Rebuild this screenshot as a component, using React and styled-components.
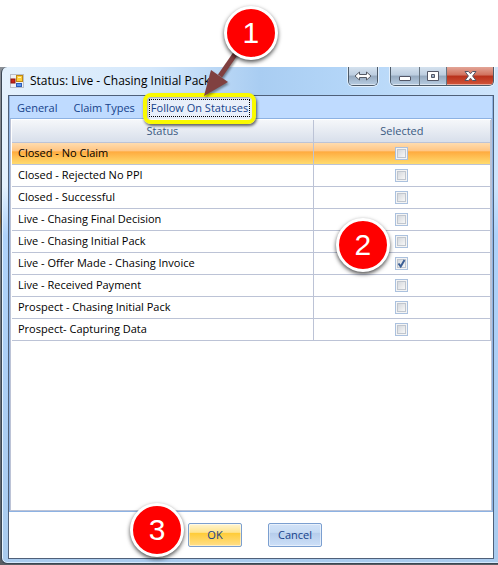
import { useState } from 'react';
import styled, { createGlobalStyle } from 'styled-components';

const GlobalStyle = createGlobalStyle`
  * {
    box-sizing: border-box;
  }

  body {
    margin: 0;
    background: #ffffff;
    font-family: 'Open Sans', 'Noto Sans', sans-serif;
    font-size: 11px;
    line-height: 16px;
    overflow: hidden;
  }

  button, input {
    font: inherit;
  }
`;

const Page = styled.main`
  display: flex;
  flex-direction: column;
  min-height: 100vh;
  padding-top: 67px;
`;

const Desktop = styled.div`
  flex: 1;
  display: flex;
  padding: 0 0 1px 1px;
  background: linear-gradient(#8a8f96, #74797f 28%, #8b6a3a 31%, #7d8288 34%, #595e64);
`;

const Window = styled.section`
  flex: 1;
  display: flex;
  flex-direction: column;
  padding: 0 4px 4px 6px;
  border: 1px solid #3a4653;
  border-top: none;
  border-right: none;
  border-radius: 6px 0 0 6px;
  background:
    linear-gradient(rgba(174, 208, 247, 0) 24%, #aed2fa 34%, #a9cbee),
    linear-gradient(90deg, #e4f1fd 0, #d5e8fb 30%, #a9cdf2 52%, #b4d6f8 70%, #cfe5fc);
  box-shadow: inset 1px 0 0 #e6f3ff, inset 0 -1px 0 #d5e9fc;
`;

const TitleBar = styled.header`
  display: flex;
  align-items: flex-start;
  height: 28px;
  padding-left: 2px;
`;

const Title = styled.h1`
  flex: 1;
  display: flex;
  align-items: center;
  gap: 6px;
  height: 28px;
  margin: 0;
  font-size: 12px;
  font-weight: 400;
  color: #000000;
`;

const ControlGroup = styled.div`
  display: flex;
  margin-left: 12px;
  border: 1px solid #4d5a68;
  border-top: none;
  border-radius: 0 0 5px 5px;
  overflow: hidden;
  box-shadow: 0 0 0 1px rgba(255, 255, 255, 0.6);
`;

const ControlButton = styled.button`
  display: flex;
  align-items: center;
  justify-content: center;
  width: ${({ $width }) => $width}px;
  height: 18px;
  padding: 0;
  border: none;
  background: ${({ $close }) =>
    $close
      ? 'linear-gradient(#e3a597, #d0705c 45%, #b8301b 50%, #d2553a)'
      : 'linear-gradient(#d5e2ef, #bccddf 45%, #95a9bf 50%, #b8cde2)'};
  box-shadow: inset 0 -1px 0 rgba(255, 255, 255, 0.5);

  & + & {
    border-left: 1px solid #66737f;
  }
`;

const Content = styled.div`
  flex: 1;
  display: flex;
  flex-direction: column;
  border: 1px solid #4f6079;
  background: #ffffff;
`;

const TabPanel = styled.div`
  flex: 1;
  display: flex;
  flex-direction: column;
  border: 1px solid #8db2e3;
  border-top: none;
`;

const TabList = styled.div`
  display: flex;
  align-items: center;
  height: 23px;
  padding: 0 2px;
  background: #bfdbff;
  border-bottom: 1px solid #8db2e3;
`;

const Tab = styled.button`
  position: relative;
  height: 23px;
  padding: 1px 4px 0;
  margin-right: 6px;
  border: none;
  outline: none;
  white-space: nowrap;
  color: #15428b;
  background: ${({ $active }) => ($active ? '#e8effa' : 'transparent')};
`;

const TabLabel = styled.span`
  display: block;
  padding: 0 1px;
  outline: ${({ $active }) => ($active ? '1px dotted #000000' : 'none')};
`;

const Highlight = styled.span`
  position: absolute;
  inset: -3px -3px -5px;
  border: 4px solid #fafa00;
  border-radius: 8px;
  box-shadow: 1px 2px 3px rgba(0, 0, 0, 0.6), inset 1px 1px 2px rgba(0, 0, 0, 0.3);
  pointer-events: none;
`;

const Arrow = styled.svg`
  position: absolute;
  left: 56px;
  top: -46px;
  overflow: visible;
  filter: drop-shadow(1px 2px 1px rgba(0, 0, 0, 0.4));
  pointer-events: none;
`;

const Badge = styled.span`
  position: absolute;
  left: ${({ $left }) => $left}px;
  top: ${({ $top }) => $top}px;
  z-index: 1;
  width: 54px;
  height: 54px;
  border: 3px solid #ffffff;
  border-radius: 50%;
  background: #ff0000;
  box-shadow: 0 2px 4px rgba(0, 0, 0, 0.7);
  color: #ffffff;
  font-family: 'Liberation Sans', Arial, sans-serif;
  font-size: 30px;
  line-height: 48px;
  text-align: center;
  pointer-events: none;
`;

const Grid = styled.div`
  flex: 1;
  padding: 1px 0 0 1px;
  border: 1px solid #bcc3d6;
  border-top: none;
`;

const Table = styled.table`
  width: 100%;
  table-layout: fixed;
  border-collapse: separate;
  border-spacing: 0;
`;

const HeaderCell = styled.th`
  height: 23px;
  padding: 0;
  border-right: 1px solid #bcc3d6;
  border-bottom: 1px solid #bcc3d6;
  background: linear-gradient(#f5f7fa, #d8dfeb);
  color: #3b5a82;
  font-weight: 400;

  &:first-child {
    width: 63%;
  }
`;

const Row = styled.tr`
  background: ${({ $current }) =>
    $current ? 'linear-gradient(#ffdcaf, #ffc583 36%, #ffab3f 40%, #ffdf73)' : '#ffffff'};
`;

const Cell = styled.td`
  position: relative;
  height: 22px;
  padding: 0 6px 2px;
  border-right: 1px solid #bcc3d6;
  border-bottom: 1px solid #bcc3d6;
  color: #000000;
  text-align: ${({ $center }) => ($center ? 'center' : 'left')};
`;

const CheckLabel = styled.label`
  position: relative;
  display: inline-flex;
  vertical-align: middle;
`;

const Checkbox = styled.input`
  appearance: none;
  width: 13px;
  height: 13px;
  margin: 0;
  border: 1px solid #abc1de;
  background: linear-gradient(135deg, #cbd0d6, #f6f6f6 80%);
  box-shadow: inset 0 0 0 1px #f4f4f4, inset 0 0 0 2px #c0c6ce;
`;

const CheckMark = styled.svg`
  position: absolute;
  inset: 0;
  pointer-events: none;
`;

const Footer = styled.footer`
  display: flex;
  align-items: center;
  justify-content: center;
  gap: 26px;
  height: 46px;
  padding-left: 8px;
`;

const ButtonSlot = styled.div`
  position: relative;
  display: flex;
`;

const Button = styled.button`
  width: 54px;
  height: 24px;
  padding: 0;
  border: 1px solid #7b9fd0;
  border-radius: 2px;
  color: #15428b;
  background: ${({ $primary }) =>
    $primary
      ? 'linear-gradient(#fff5d0, #ffe48f 38%, #ffcc38 42%, #ffdf8a)'
      : 'linear-gradient(#d2e2f7, #c6dbf4 38%, #b6cdeb 42%, #cde0f8)'};
  box-shadow: inset 0 0 0 1px rgba(255, 255, 255, 0.5);
`;

const STATUSES = [
  { name: 'Closed - No Claim', selected: false },
  { name: 'Closed - Rejected No PPI', selected: false },
  { name: 'Closed - Successful', selected: false },
  { name: 'Live - Chasing Final Decision', selected: false },
  { name: 'Live - Chasing Initial Pack', selected: false, badge: 2 },
  { name: 'Live - Offer Made - Chasing Invoice', selected: true },
  { name: 'Live - Received Payment', selected: false },
  { name: 'Prospect - Chasing Initial Pack', selected: false },
  { name: 'Prospect- Capturing Data', selected: false },
];

function FormIcon() {
  return (
    <svg width="14" height="14" viewBox="0 0 14 14" aria-hidden="true">
      <rect x="0.5" y="0.5" width="13" height="13" fill="#eef1f5" stroke="#b9bec8" />
      <rect x="1" y="5" width="4" height="4" fill="#c9241a" stroke="#8f1710" />
      <rect x="6.5" y="1.5" width="6" height="6" fill="#ffcf3d" stroke="#c08a12" />
      <path d="M8 3h3v1H8z" fill="#fff1b5" />
      <rect x="6.5" y="9.5" width="5" height="3" fill="#5c95ef" stroke="#2c5cb8" />
    </svg>
  );
}

function ResizeIcon() {
  return (
    <svg width="18" height="10" viewBox="0 0 18 10" aria-hidden="true">
      <path
        d="M1 5l4.500-4v2.500h7V1L17 5l-4.500 4V6.500h-7V9z"
        fill="#ffffff"
        stroke="#555b66"
        strokeLinejoin="round"
      />
    </svg>
  );
}

function MinimizeIcon() {
  return (
    <svg width="14" height="12" viewBox="0 0 14 12" aria-hidden="true">
      <rect x="1.500" y="6.500" width="11" height="4" rx="0.5" fill="#ffffff" stroke="#535666" />
    </svg>
  );
}

function MaximizeIcon() {
  return (
    <svg width="12" height="12" viewBox="0 0 12 12" aria-hidden="true">
      <path
        d="M0.500 1.500h11v9h-11zM4.500 4.500v3h3v-3z"
        fill="#ffffff"
        fillRule="evenodd"
        stroke="#535666"
      />
    </svg>
  );
}

function CloseIcon() {
  return (
    <svg width="13" height="12" viewBox="0 0 13 12" aria-hidden="true">
      <path
        d="M1 1.500h3.500l2 2.300 2-2.300H12L8.600 6l3.400 4.500H8.500l-2-2.300-2 2.300H1L4.400 6z"
        fill="#ffffff"
        stroke="#535666"
        strokeLinejoin="round"
      />
    </svg>
  );
}

function App() {
  const [tab, setTab] = useState('Follow On Statuses');
  const [rows, setRows] = useState(STATUSES);

  const toggle = (name) => {
    setRows(rows.map((row) => (row.name === name ? { ...row, selected: !row.selected } : row)));
  };

  return (
    <>
      <GlobalStyle />
      <Page>
        <Desktop>
          <Window>
            <TitleBar>
              <Title>
                <FormIcon />
                Status: Live - Chasing Initial Pack
              </Title>
              <ControlGroup>
                <ControlButton $width={28} aria-label="Resize"><ResizeIcon /></ControlButton>
              </ControlGroup>
              <ControlGroup>
                <ControlButton $width={28} aria-label="Minimize"><MinimizeIcon /></ControlButton>
                <ControlButton $width={27} aria-label="Maximize"><MaximizeIcon /></ControlButton>
                <ControlButton $width={47} $close aria-label="Close"><CloseIcon /></ControlButton>
              </ControlGroup>
            </TitleBar>

            <Content>
              <TabPanel>
                <TabList role="tablist">
                  {['General', 'Claim Types', 'Follow On Statuses'].map((name) => (
                    <Tab
                      key={name}
                      role="tab"
                      aria-selected={tab === name}
                      $active={tab === name}
                      onClick={() => setTab(name)}
                    >
                      <TabLabel $active={tab === name}>{name}</TabLabel>
                      {name === 'Follow On Statuses' && (
                        <>
                          <Highlight />
                          <Arrow width="36" height="46" viewBox="0 0 36 46" aria-hidden="true">
                            <path d="M36 0L18 26" stroke="#804040" strokeWidth="5" />
                            <path d="M2 46L9 20L26 32z" fill="#804040" />
                          </Arrow>
                          <Badge $left={78} $top={-90}>1</Badge>
                        </>
                      )}
                    </Tab>
                  ))}
                </TabList>

                <Grid>
                  <Table>
                    <thead>
                      <tr>
                        <HeaderCell>Status</HeaderCell>
                        <HeaderCell>Selected</HeaderCell>
                      </tr>
                    </thead>
                    <tbody>
                      {rows.map((row, index) => (
                        <Row key={row.name} $current={index === 0}>
                          <Cell>{row.name}</Cell>
                          <Cell $center>
                            <CheckLabel>
                              <Checkbox
                                type="checkbox"
                                aria-label={row.name}
                                checked={row.selected}
                                onChange={() => toggle(row.name)}
                              />
                              {row.selected && (
                                <CheckMark width="13" height="13" viewBox="0 0 13 13">
                                  <path d="M3.500 6.500l2.200 3L9.500 3" fill="none" stroke="#3c5f95" strokeWidth="2" />
                                </CheckMark>
                              )}
                            </CheckLabel>
                            {row.badge && <Badge $left={22} $top={-13}>{row.badge}</Badge>}
                          </Cell>
                        </Row>
                      ))}
                    </tbody>
                  </Table>
                </Grid>
              </TabPanel>

              <Footer>
                <ButtonSlot>
                  <Badge $left={-58} $top={-20}>3</Badge>
                  <Button $primary>OK</Button>
                </ButtonSlot>
                <Button>Cancel</Button>
              </Footer>
            </Content>
          </Window>
        </Desktop>
      </Page>
    </>
  );
}

export default App;
